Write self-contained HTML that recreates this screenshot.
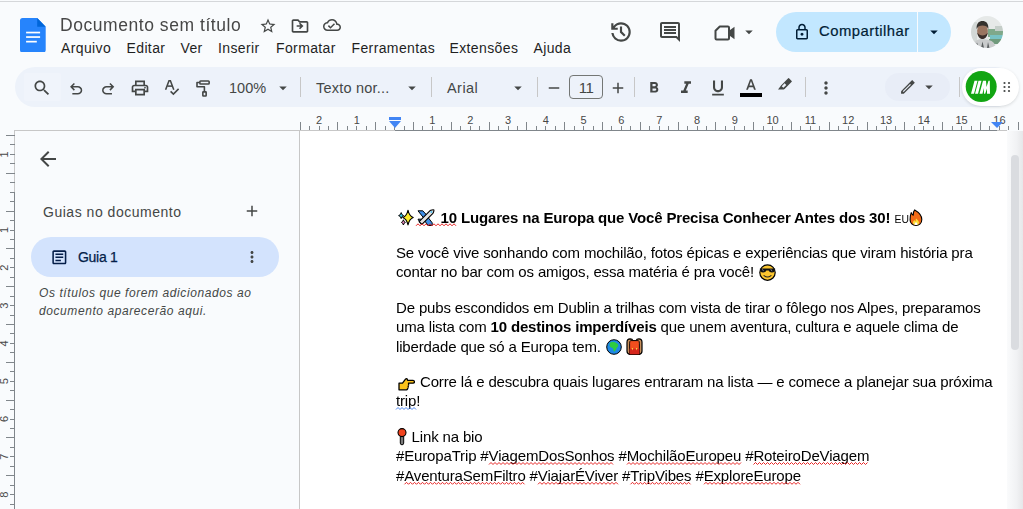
<!DOCTYPE html>
<html><head><meta charset="utf-8">
<style>
*{margin:0;padding:0;box-sizing:border-box}
html,body{width:1023px;height:509px;overflow:hidden;background:#f9fbfd;font-family:"Liberation Sans",sans-serif;color:#1f1f1f;position:relative}
.a{position:absolute}
.topline{left:0;top:1px;width:1023px;height:1px;background:#d5d7da}
.title{left:60px;top:15px;font-size:17.5px;letter-spacing:0.55px;color:#474747;white-space:nowrap;will-change:transform}
.menu{top:40px;font-size:14px;letter-spacing:0.38px;color:#1f1f1f;white-space:nowrap}
.toolbar{left:15px;top:67px;width:1000px;height:40px;border-radius:20px;background:#edf2fa}
.tb{color:#444746;font-size:14px;white-space:nowrap}
.sep{width:1px;height:20px;background:#c7c7c7;top:77px}
.share{left:776px;top:12px;width:175px;height:40px;border-radius:20px;background:#c2e7ff}
.page{left:300px;top:131px;width:707px;height:378px;background:#fff}
.doc{left:396px;font-size:15px;letter-spacing:-0.15px;color:#000;white-space:nowrap;line-height:19.45px}
.doc b{font-weight:bold}
svg.i{position:absolute}
.gs{position:absolute;left:0;top:0;width:1023px;height:509px;will-change:transform}
.wavy{text-decoration:underline wavy #e23b2e;text-decoration-thickness:1px;text-underline-offset:2px;text-decoration-skip-ink:none}
</style></head><body>
<div class="a topline"></div>
<!-- docs logo -->
<svg class="a" style="left:20px;top:17.7px" width="26" height="34.5" viewBox="0 0 26 34.5">
<path d="M2.6 0H17.2L25.7 8.7V31.9a2.6 2.6 0 0 1-2.6 2.6H2.6A2.6 2.6 0 0 1 0 31.9V2.6A2.6 2.6 0 0 1 2.6 0z" fill="#2684fc"/>
<path d="M17.2 0L25.7 8.7H17.2z" fill="#0066da"/>
<rect x="6.1" y="13.7" width="14" height="1.7" fill="#fff"/>
<rect x="6.1" y="18.2" width="14" height="1.7" fill="#fff"/>
<rect x="6.1" y="22.8" width="10.7" height="1.7" fill="#fff"/>
</svg>
<div class="a title">Documento sem título</div>
<div class="a menu" style="left:61px">Arquivo</div>
<div class="a menu" style="left:126.5px">Editar</div>
<div class="a menu" style="left:180.5px">Ver</div>
<div class="a menu" style="left:218px">Inserir</div>
<div class="a menu" style="left:276px">Formatar</div>
<div class="a menu" style="left:351.5px">Ferramentas</div>
<div class="a menu" style="left:449.5px">Extensões</div>
<div class="a menu" style="left:533.5px">Ajuda</div>
<!-- star -->
<svg class="i" style="left:259px;top:17px" width="18" height="18" viewBox="0 0 24 24"><path fill="#444746" d="M22 9.24l-7.19-.62L12 2 9.19 8.63 2 9.24l5.46 4.73L5.82 21 12 17.27 18.18 21l-1.63-7.03L22 9.24zM12 15.4l-3.76 2.27 1-4.28-3.32-2.88 4.38-.38L12 6.1l1.71 4.04 4.38.38-3.32 2.88 1 4.28L12 15.4z"/></svg>
<!-- move folder -->
<svg class="i" style="left:290px;top:16px" width="20" height="20" viewBox="0 0 24 24"><path fill="#444746" d="M4 20q-.825 0-1.412-.587Q2 18.825 2 18V6q0-.825.588-1.412Q3.175 4 4 4h6l2 2h8q.825 0 1.413.588Q22 7.175 22 8v10q0 .825-.587 1.413Q20.825 20 20 20Zm0-2h16V8h-8.825l-2-2H4v12Zm0 0V6v12Zm8.15-2 4-4-4-4-1.4 1.4 1.6 1.6H8v2h4.35l-1.6 1.6Z"/></svg>
<!-- cloud done -->
<svg class="i" style="left:323px;top:16px" width="18" height="18" viewBox="0 0 24 24"><path fill="#444746" d="M19.35 10.04C18.67 6.59 15.64 4 12 4 9.11 4 6.6 5.64 5.35 8.04 2.34 8.36 0 10.91 0 14c0 3.310 2.69 6 6 6h13c2.76 0 5-2.24 5-5 0-2.64-2.05-4.78-4.65-4.96zM19 18H6c-2.21 0-4-1.790-4-4 0-2.05 1.53-3.76 3.56-3.97l1.07-.11.5-.95C8.08 7.14 9.94 6 12 6c2.62 0 4.88 1.86 5.39 4.43l.3 1.5 1.53.11c1.56.1 2.78 1.41 2.78 2.96 0 1.65-1.35 3-3 3zm-9-3.82l-2.09-2.09L6.5 13.5 10 17l6.01-6.01-1.41-1.41z"/></svg>

<!-- history -->
<svg class="i" style="left:607.6px;top:19.3px" width="26" height="26" viewBox="0 0 24 24"><path fill="#444746" d="M12 21q-3.45 0-6.012-2.288Q3.425 16.425 3.05 13H5.1q.35 2.6 2.313 4.3Q9.375 19 12 19q2.925 0 4.962-2.038Q19 14.925 19 12t-2.038-4.963Q14.925 5 12 5q-1.725 0-3.225.8T6.250 8H9v2H3V4h2v2.350q1.275-1.6 3.113-2.475Q9.950 3 12 3q1.875 0 3.513.712 1.637.713 2.85 1.926 1.212 1.212 1.925 2.85Q21 10.125 21 12t-.712 3.512q-.713 1.638-1.925 2.85-1.213 1.213-2.850 1.926Q13.875 21 12 21Zm2.8-4.8L11 12.4V7h2v4.6l3.2 3.2Z"/></svg>
<!-- comment -->
<svg class="i" style="left:658px;top:20px" width="24" height="24" viewBox="0 0 24 24"><path fill="#444746" d="M21.99 4c0-1.1-.89-2-1.99-2H4c-1.1 0-2 .9-2 2v12c0 1.1.9 2 2 2h14l4 4-.01-18zM20 4v13.17L18.83 16H4V4h16zM6 12h12v2H6zm0-3h12v2H6zm0-3h12v2H6z"/></svg>
<!-- meet -->
<svg class="i" style="left:713px;top:21px" width="24" height="24" viewBox="0 0 24 24"><path d="M6.8 5.5H14.9Q16 5.5 16 6.6V17.4Q16 18.5 14.9 18.5H3.6Q2.5 18.5 2.5 17.4V9.8Z" fill="none" stroke="#444746" stroke-width="2" stroke-linejoin="round"/><path d="M16 9.8L21.5 5.8V18.2L16 14.2Z" fill="#444746"/></svg>
<svg class="i" style="left:740px;top:23px" width="18" height="18" viewBox="0 0 24 24"><path fill="#444746" d="M7 10l5 5 5-5z"/></svg>

<div class="a share"></div>
<div class="a" style="left:917px;top:12px;width:1px;height:40px;background:#f9fbfd"></div>
<svg class="i" style="left:793px;top:23px" width="18" height="18" viewBox="0 0 24 24"><path fill="#001d35" d="M6 22q-.825 0-1.412-.587Q4 20.825 4 20V10q0-.825.588-1.413Q5.175 8 6 8h1V6q0-2.075 1.463-3.538Q9.925 1 12 1t3.538 1.462Q17 3.925 17 6v2h1q.825 0 1.413.587Q20 9.175 20 10v10q0 .825-.587 1.413Q18.825 22 18 22Zm0-2h12V10H6v10Zm6-3q.825 0 1.413-.587Q14 15.825 14 15q0-.825-.587-1.413Q12.825 13 12 13q-.825 0-1.412.587Q10 14.175 10 15q0 .825.588 1.413Q11.175 17 12 17ZM9 8h6V6q0-1.25-.875-2.125T12 3q-1.25 0-2.125.875T9 6ZM6 20V10v10Z"/></svg>
<div class="a" style="left:819px;top:23px;font-size:14.8px;letter-spacing:0.5px;-webkit-text-stroke:0.2px #001d35;color:#001d35;white-space:nowrap">Compartilhar</div>
<svg class="i" style="left:925px;top:23px" width="18" height="18" viewBox="0 0 24 24"><path fill="#001d35" d="M7 10l5 5 5-5z"/></svg>
<!-- avatar -->
<svg class="i" style="left:971px;top:16px" width="32" height="32" viewBox="0 0 32 32">
<defs><clipPath id="av"><circle cx="16" cy="16" r="16"/></clipPath><filter id="bl" x="-10%" y="-10%" width="120%" height="120%"><feGaussianBlur stdDeviation="0.45"/></filter></defs>
<g clip-path="url(#av)"><g filter="url(#bl)">
<rect width="32" height="32" fill="#e6e9e8"/>
<rect x="0" y="6" width="6" height="20" fill="#d3d8d6"/>
<rect x="17" y="13" width="15" height="8" fill="#7fa88a"/>
<rect x="24" y="10" width="8" height="5" fill="#c5cec9"/>
<rect x="19" y="19" width="13" height="5" fill="#79c2c4"/>
<rect x="18" y="23" width="14" height="5" fill="#6f9a7c"/>
<path d="M1 32C2 26 5 23.5 10.5 23C16 23 20 24 23 27L25 32Z" fill="#c9cbcc"/>
<path d="M4 32L6 26.5L8 32ZM10 32L11.5 25.5L13 32ZM16 32L17 26L18.5 32Z" fill="#5a5e61"/>
<ellipse cx="11.5" cy="15" rx="5.4" ry="7" fill="#9a7560"/>
<path d="M5.6 13C5.3 7.3 8 5 11.5 5C15 5 17.7 7.3 17.4 13C16.3 10.3 14.2 9.4 11.5 9.4C8.8 9.4 6.7 10.3 5.6 13Z" fill="#35302d"/>
<path d="M6.2 16.5C7 21.5 9.5 23 11.5 23C13.5 23 16 21.5 16.8 16.5C15.4 18.6 13.6 19.4 11.5 19.4C9.4 19.4 7.6 18.6 6.2 16.5Z" fill="#3a2f2a"/>
</g></g></svg>

<!-- toolbar -->
<div class="a toolbar"></div>
<div class="a" style="left:24px;top:73px;width:37px;height:28px;background:#f0f4fb;border-radius:2px"></div>
<svg class="i" style="left:32px;top:78px" width="20" height="20" viewBox="0 0 24 24"><path fill="#444746" d="M15.5 14h-.79l-.28-.27C15.41 12.59 16 11.11 16 9.5 16 5.91 13.09 3 9.5 3S3 5.91 3 9.5 5.91 16 9.5 16c1.61 0 3.09-.59 4.23-1.57l.27.28v.79l5 4.99L20.49 19l-4.99-5zm-6 0C7.010 14 5 11.99 5 9.5S7.01 5 9.5 5 14 7.01 14 9.5 11.99 14 9.5 14z"/></svg>
<svg class="i" style="left:66.6px;top:80.2px" width="18.3" height="18.3" viewBox="0 0 24 24"><path fill="#444746" d="M7 19v-2h7.1q1.575 0 2.738-1T18 13.5q0-1.5-1.162-2.5T14.1 10H7.8l2.6 2.6L9 14 4 9l5-5 1.4 1.4L7.8 8h6.3q2.425 0 4.163 1.575T20 13.5q0 2.35-1.737 3.925T14.1 19Z"/></svg>
<svg class="i" style="left:99px;top:80.2px" width="18.3" height="18.3" viewBox="0 0 24 24"><path fill="#444746" transform="translate(24 0) scale(-1 1)" d="M7 19v-2h7.1q1.575 0 2.738-1T18 13.5q0-1.5-1.162-2.5T14.1 10H7.8l2.6 2.6L9 14 4 9l5-5 1.4 1.4L7.8 8h6.3q2.425 0 4.163 1.575T20 13.5q0 2.35-1.737 3.925T14.1 19Z"/></svg>
<svg class="i" style="left:130px;top:78px" width="20" height="20" viewBox="0 0 24 24"><path fill="#444746" d="M16 8V5H8v3H6V3h12v5ZM18 12.5q.425 0 .713-.288Q19 11.925 19 11.5t-.287-.713Q18.425 10.5 18 10.5t-.712.287Q17 11.075 17 11.5t.288.712q.287.288.712.288ZM16 19v-4H8v4Zm2 2H6v-4H2v-6q0-1.275.875-2.138Q3.75 8 5 8h14q1.275 0 2.138.862Q22 9.725 22 11v6h-4Zm2-6v-4q0-.425-.288-.713Q19.425 10 19 10H5q-.425 0-.713.287Q4 10.575 4 11v4h2v-2h12v2Z"/></svg>
<svg class="i" style="left:160px;top:76px" width="24" height="24" viewBox="0 0 24 24"><g fill="none" stroke="#444746" stroke-width="1.55"><path d="M5.6 13.8L9 4.8H10.4L13.8 13.8" stroke-linejoin="miter"/><path d="M7.3 10.1H12.1"/><path d="M10.6 15.4L13.4 18.1L18.6 12.9"/></g></svg>
<svg class="i" style="left:192px;top:76px" width="22" height="24" viewBox="0 0 22 24"><g fill="none" stroke="#444746" stroke-width="1.6" stroke-linejoin="round"><rect x="7.85" y="4.95" width="9.3" height="3" rx="0.8"/><path d="M7.1 6.45H5.0V10.8H12.4V15.1"/><rect x="10.85" y="15.85" width="3.3" height="4.2" rx="0.5"/></g></svg>
<div class="a tb" style="left:229px;top:80px;font-size:14.5px;letter-spacing:0px">100%</div>
<svg class="i" style="left:274px;top:79px" width="18" height="18" viewBox="0 0 24 24"><path fill="#444746" d="M7 10l5 5 5-5z"/></svg>
<div class="a sep" style="left:300px"></div>
<div class="a tb" style="left:316px;top:80px;font-size:14.5px;letter-spacing:0.22px">Texto nor...</div>
<svg class="i" style="left:403px;top:79px" width="18" height="18" viewBox="0 0 24 24"><path fill="#444746" d="M7 10l5 5 5-5z"/></svg>
<div class="a sep" style="left:431px"></div>
<div class="a tb" style="left:447px;top:80px;font-size:14.5px;letter-spacing:0.45px">Arial</div>
<svg class="i" style="left:508.5px;top:79px" width="18" height="18" viewBox="0 0 24 24"><path fill="#444746" d="M7 10l5 5 5-5z"/></svg>
<div class="a sep" style="left:537px"></div>
<svg class="i" style="left:545px;top:79px" width="18" height="18" viewBox="0 0 24 24"><path fill="#444746" d="M19 13H5v-2h14v2z"/></svg>
<div class="a" style="left:569px;top:75px;width:34px;height:24px;border:1px solid #747775;border-radius:4px"></div>
<div class="a tb" style="left:569px;top:79px;width:34px;text-align:center;font-size:15px;letter-spacing:-0.5px">11</div>
<svg class="i" style="left:609px;top:78.5px" width="18" height="18" viewBox="0 0 24 24"><path fill="#444746" d="M19 13h-6v6h-2v-6H5v-2h6V5h2v6h6v2z"/></svg>
<div class="a sep" style="left:634px"></div>
<svg class="i" style="left:645px;top:79px" width="18" height="18" viewBox="0 0 24 24"><path fill="#444746" d="M15.6 10.79c.97-.67 1.65-1.77 1.65-2.79 0-2.26-1.75-4-4-4H7v14h7.04c2.09 0 3.71-1.7 3.71-3.79 0-1.52-.86-2.82-2.15-3.42zM10 6.5h3c.83 0 1.5.67 1.5 1.5s-.67 1.5-1.5 1.5h-3v-3zm3.5 9H10v-3h3.5c.83 0 1.5.67 1.5 1.5s-.67 1.5-1.5 1.5z"/></svg>
<svg class="i" style="left:676px;top:78px" width="20" height="20" viewBox="0 0 24 24"><path fill="#444746" d="M10 4v3h2.21l-3.42 8H6v3h8v-3h-2.21l3.42-8H18V4z"/></svg>
<svg class="i" style="left:708px;top:78px" width="20" height="20" viewBox="0 0 24 24"><path fill="#444746" d="M12 17c3.31 0 6-2.69 6-6V3h-2.5v8c0 1.93-1.57 3.5-3.5 3.5S8.5 12.930 8.5 11V3H6v8c0 3.31 2.69 6 6 6zm-7 2v2h14v-2H5z"/></svg>
<svg class="i" style="left:742px;top:77px" width="18" height="14.25" viewBox="0 0 24 19"><path fill="#444746" d="M5.49 17h2.42l1.27-3.5h5.65L16.09 17h2.42L13.25 3h-2.5L5.490 17zm4.42-5.61l2.03-5.79h.12l2.03 5.79H9.91z"/></svg>
<div class="a" style="left:740px;top:93px;width:22px;height:4px;background:#000"></div>
<svg class="i" style="left:775px;top:75px" width="20" height="20" viewBox="0 0 20 20"><path fill="#444746" d="M13.2 3.3Q13.6 2.9 14 3.3L16.7 6Q17.1 6.4 16.7 6.8L9.6 13.9L8.6 14.6H3L5.3 11.6L6 10.5Z"/><path fill="#edf2fa" d="M8.44 12.86L6.74 11.16L9.56 8.34L11.26 10.04Z"/></svg>
<div class="a sep" style="left:805px"></div>
<svg class="i" style="left:816px;top:78px" width="20" height="20" viewBox="0 0 24 24"><path fill="#444746" d="M12 8c1.1 0 2-.9 2-2s-.9-2-2-2-2 .9-2 2 .9 2 2 2zm0 2c-1.1 0-2 .9-2 2s.9 2 2 2 2-.9 2-2-.9-2-2-2zm0 6c-1.1 0-2 .9-2 2s.9 2 2 2 2-.9 2-2-.9-2-2-2z"/></svg>
<div class="a" style="left:885px;top:72.5px;width:64.5px;height:28.5px;border-radius:14px;background:#e8edf7"></div>
<svg class="i" style="left:897px;top:77px" width="20" height="20" viewBox="0 0 20 20"><path fill="#444746" d="M4.06 14.16L15.16 3.06L17.84 5.74L6.74 16.84L4.06 16.84Z"/><path fill="#e8edf7" d="M5.78 14.28L13.08 6.98L13.92 7.82L6.62 15.12Z"/></svg>
<svg class="i" style="left:920px;top:78px" width="18" height="18" viewBox="0 0 24 24"><path fill="#444746" d="M7 10l5 5 5-5z"/></svg>
<div class="a sep" style="left:959px"></div>
<div class="a" style="left:962px;top:68px;width:57px;height:38px;border-radius:19px;background:#fff;box-shadow:0 1px 3px rgba(60,64,67,.18)"></div>
<svg class="i" style="left:964px;top:70px" width="34" height="34" viewBox="0 0 34 34"><circle cx="17.2" cy="16.6" r="15.5" fill="#12a512"/>
<path fill="#fff" d="M7 23.8L10 23.8L13.5 10.7L10.5 10.7ZM11 23.8L14 23.8L17.5 10.7L14.5 10.7ZM15.5 23.8L19 10.7L22 10.7L22.5 17L24.5 10.7L25.8 10.7L26 23.8L23 23.8L23 18.5L21.2 23.8L20 23.8L19.8 18L18.5 23.8Z"/></svg>
<svg class="i" style="left:1001px;top:81px" width="12" height="12" viewBox="0 0 12 12"><g fill="#444746"><circle cx="3.5" cy="2" r="1.1"/><circle cx="8" cy="2" r="1.1"/><circle cx="3.5" cy="6" r="1.1"/><circle cx="8" cy="6" r="1.1"/><circle cx="3.5" cy="10" r="1.1"/><circle cx="8" cy="10" r="1.1"/></g></svg>

<!-- page -->
<div class="a page"></div>
<div class="a" style="left:299px;top:131px;width:1px;height:378px;background:#c7c7c7"></div>
<div class="a" style="left:15px;top:130px;width:285px;height:1px;background:#c7c7c7"></div>
<div class="a" style="left:298px;top:130px;width:97px;height:1px;background:#c7c7c7"></div>
<div class="a" style="left:395px;top:130px;width:602px;height:1px;background:#80868b"></div>
<div class="a" style="left:997px;top:130px;width:10px;height:1px;background:#c7c7c7"></div>
<div class="a" style="left:14px;top:130px;width:1px;height:62px;background:#c7c7c7"></div>
<div class="a" style="left:14px;top:192px;width:1px;height:317px;background:#80868b"></div>
<!-- scrollbar -->
<div class="a" style="left:1007px;top:131px;width:16px;height:378px;background:linear-gradient(90deg,#fafbfc 0%,#f1f2f4 60%,#e6e7e9 100%)"></div>
<div class="a" style="left:1011px;top:155px;width:8px;height:195px;border-radius:4px;background:#dadce0"></div>

<svg class="a" style="left:290px;top:108px" width="733" height="24" viewBox="0 0 733 24">
<g stroke="#80868b" stroke-width="1" shape-rendering="crispEdges"><line x1="10.10" y1="14" x2="10.10" y2="22"/><line x1="19.55" y1="18" x2="19.55" y2="22"/><line x1="29.00" y1="18" x2="29.00" y2="22"/><line x1="38.45" y1="18" x2="38.45" y2="22"/><line x1="47.90" y1="14" x2="47.90" y2="22"/><line x1="57.35" y1="18" x2="57.35" y2="22"/><line x1="66.80" y1="18" x2="66.80" y2="22"/><line x1="76.25" y1="18" x2="76.25" y2="22"/><line x1="85.70" y1="14" x2="85.70" y2="22"/><line x1="95.15" y1="18" x2="95.15" y2="22"/><line x1="104.60" y1="18" x2="104.60" y2="22"/><line x1="114.05" y1="18" x2="114.05" y2="22"/><line x1="123.50" y1="14" x2="123.50" y2="22"/><line x1="132.95" y1="18" x2="132.95" y2="22"/><line x1="142.40" y1="18" x2="142.40" y2="22"/><line x1="151.85" y1="18" x2="151.85" y2="22"/><line x1="161.30" y1="14" x2="161.30" y2="22"/><line x1="170.75" y1="18" x2="170.75" y2="22"/><line x1="180.20" y1="18" x2="180.20" y2="22"/><line x1="189.65" y1="18" x2="189.65" y2="22"/><line x1="199.10" y1="14" x2="199.10" y2="22"/><line x1="208.55" y1="18" x2="208.55" y2="22"/><line x1="218.00" y1="18" x2="218.00" y2="22"/><line x1="227.45" y1="18" x2="227.45" y2="22"/><line x1="236.90" y1="14" x2="236.90" y2="22"/><line x1="246.35" y1="18" x2="246.35" y2="22"/><line x1="255.80" y1="18" x2="255.80" y2="22"/><line x1="265.25" y1="18" x2="265.25" y2="22"/><line x1="274.70" y1="14" x2="274.70" y2="22"/><line x1="284.15" y1="18" x2="284.15" y2="22"/><line x1="293.60" y1="18" x2="293.60" y2="22"/><line x1="303.05" y1="18" x2="303.05" y2="22"/><line x1="312.50" y1="14" x2="312.50" y2="22"/><line x1="321.95" y1="18" x2="321.95" y2="22"/><line x1="331.40" y1="18" x2="331.40" y2="22"/><line x1="340.85" y1="18" x2="340.85" y2="22"/><line x1="350.30" y1="14" x2="350.30" y2="22"/><line x1="359.75" y1="18" x2="359.75" y2="22"/><line x1="369.20" y1="18" x2="369.20" y2="22"/><line x1="378.65" y1="18" x2="378.65" y2="22"/><line x1="388.10" y1="14" x2="388.10" y2="22"/><line x1="397.55" y1="18" x2="397.55" y2="22"/><line x1="407.00" y1="18" x2="407.00" y2="22"/><line x1="416.45" y1="18" x2="416.45" y2="22"/><line x1="425.90" y1="14" x2="425.90" y2="22"/><line x1="435.35" y1="18" x2="435.35" y2="22"/><line x1="444.80" y1="18" x2="444.80" y2="22"/><line x1="454.25" y1="18" x2="454.25" y2="22"/><line x1="463.70" y1="14" x2="463.70" y2="22"/><line x1="473.15" y1="18" x2="473.15" y2="22"/><line x1="482.60" y1="18" x2="482.60" y2="22"/><line x1="492.05" y1="18" x2="492.05" y2="22"/><line x1="501.50" y1="14" x2="501.50" y2="22"/><line x1="510.95" y1="18" x2="510.95" y2="22"/><line x1="520.40" y1="18" x2="520.40" y2="22"/><line x1="529.85" y1="18" x2="529.85" y2="22"/><line x1="539.30" y1="14" x2="539.30" y2="22"/><line x1="548.75" y1="18" x2="548.75" y2="22"/><line x1="558.20" y1="18" x2="558.20" y2="22"/><line x1="567.65" y1="18" x2="567.65" y2="22"/><line x1="577.10" y1="14" x2="577.10" y2="22"/><line x1="586.55" y1="18" x2="586.55" y2="22"/><line x1="596.00" y1="18" x2="596.00" y2="22"/><line x1="605.45" y1="18" x2="605.45" y2="22"/><line x1="614.90" y1="14" x2="614.90" y2="22"/><line x1="624.35" y1="18" x2="624.35" y2="22"/><line x1="633.80" y1="18" x2="633.80" y2="22"/><line x1="643.25" y1="18" x2="643.25" y2="22"/><line x1="652.70" y1="14" x2="652.70" y2="22"/><line x1="662.15" y1="18" x2="662.15" y2="22"/><line x1="671.60" y1="18" x2="671.60" y2="22"/><line x1="681.05" y1="18" x2="681.05" y2="22"/><line x1="690.50" y1="14" x2="690.50" y2="22"/><line x1="699.95" y1="18" x2="699.95" y2="22"/><line x1="709.40" y1="18" x2="709.40" y2="22"/><line x1="718.85" y1="18" x2="718.85" y2="22"/><line x1="728.30" y1="14" x2="728.30" y2="22"/></g>
<g font-family="Liberation Sans" font-size="11" fill="#474747" text-anchor="middle"><text x="29.00" y="16">2</text><text x="66.80" y="16">1</text><text x="142.40" y="16">1</text><text x="180.20" y="16">2</text><text x="218.00" y="16">3</text><text x="255.80" y="16">4</text><text x="293.60" y="16">5</text><text x="331.40" y="16">6</text><text x="369.20" y="16">7</text><text x="407.00" y="16">8</text><text x="444.80" y="16">9</text><text x="482.60" y="16">10</text><text x="520.40" y="16">11</text><text x="558.20" y="16">12</text><text x="596.00" y="16">13</text><text x="633.80" y="16">14</text><text x="671.60" y="16">15</text><text x="709.40" y="16">16</text></g>
</svg>
<svg class="a" style="left:0;top:0" width="16" height="509" viewBox="0 0 16 509">
<g stroke="#80868b" stroke-width="1" shape-rendering="crispEdges"><line x1="6" y1="135.50" x2="15" y2="135.50"/><line x1="10" y1="144.95" x2="15" y2="144.95"/><line x1="10" y1="154.40" x2="15" y2="154.40"/><line x1="10" y1="163.85" x2="15" y2="163.85"/><line x1="6" y1="173.30" x2="15" y2="173.30"/><line x1="10" y1="182.75" x2="15" y2="182.75"/><line x1="10" y1="192.20" x2="15" y2="192.20"/><line x1="10" y1="201.65" x2="15" y2="201.65"/><line x1="6" y1="211.10" x2="15" y2="211.10"/><line x1="10" y1="220.55" x2="15" y2="220.55"/><line x1="10" y1="230.00" x2="15" y2="230.00"/><line x1="10" y1="239.45" x2="15" y2="239.45"/><line x1="6" y1="248.90" x2="15" y2="248.90"/><line x1="10" y1="258.35" x2="15" y2="258.35"/><line x1="10" y1="267.80" x2="15" y2="267.80"/><line x1="10" y1="277.25" x2="15" y2="277.25"/><line x1="6" y1="286.70" x2="15" y2="286.70"/><line x1="10" y1="296.15" x2="15" y2="296.15"/><line x1="10" y1="305.60" x2="15" y2="305.60"/><line x1="10" y1="315.05" x2="15" y2="315.05"/><line x1="6" y1="324.50" x2="15" y2="324.50"/><line x1="10" y1="333.95" x2="15" y2="333.95"/><line x1="10" y1="343.40" x2="15" y2="343.40"/><line x1="10" y1="352.85" x2="15" y2="352.85"/><line x1="6" y1="362.30" x2="15" y2="362.30"/><line x1="10" y1="371.75" x2="15" y2="371.75"/><line x1="10" y1="381.20" x2="15" y2="381.20"/><line x1="10" y1="390.65" x2="15" y2="390.65"/><line x1="6" y1="400.10" x2="15" y2="400.10"/><line x1="10" y1="409.55" x2="15" y2="409.55"/><line x1="10" y1="419.00" x2="15" y2="419.00"/><line x1="10" y1="428.45" x2="15" y2="428.45"/><line x1="6" y1="437.90" x2="15" y2="437.90"/><line x1="10" y1="447.35" x2="15" y2="447.35"/><line x1="10" y1="456.80" x2="15" y2="456.80"/><line x1="10" y1="466.25" x2="15" y2="466.25"/><line x1="6" y1="475.70" x2="15" y2="475.70"/><line x1="10" y1="485.15" x2="15" y2="485.15"/><line x1="10" y1="494.60" x2="15" y2="494.60"/><line x1="10" y1="504.05" x2="15" y2="504.05"/></g>
<g font-family="Liberation Sans" font-size="11" fill="#474747" text-anchor="middle"><text transform="translate(8 154.40) rotate(-90)" y="0">1</text><text transform="translate(8 230.00) rotate(-90)" y="0">1</text><text transform="translate(8 267.80) rotate(-90)" y="0">2</text><text transform="translate(8 305.60) rotate(-90)" y="0">3</text><text transform="translate(8 343.40) rotate(-90)" y="0">4</text><text transform="translate(8 381.20) rotate(-90)" y="0">5</text><text transform="translate(8 419.00) rotate(-90)" y="0">6</text><text transform="translate(8 456.80) rotate(-90)" y="0">7</text><text transform="translate(8 494.60) rotate(-90)" y="0">8</text></g>
</svg>
<!-- margin markers -->
<svg class="i" style="left:388px;top:116px" width="14" height="14" viewBox="0 0 14 14"><rect x="1" y="1" width="12" height="3" fill="#4285f4"/><path d="M1 5h12l-6 7z" fill="#4285f4"/></svg>
<svg class="i" style="left:990px;top:120px" width="14" height="10" viewBox="0 0 14 10"><path d="M1 2h12l-6 6z" fill="#4285f4"/></svg>

<!-- sidebar -->
<svg class="i" style="left:36px;top:147px" width="24" height="24" viewBox="0 0 24 24"><path fill="#444746" d="M20 11H7.83l5.59-5.59L12 4l-8 8 8 8 1.41-1.41L7.83 13H20v-2z"/></svg>
<div class="a" style="left:43px;top:203.5px;font-size:14px;letter-spacing:0.52px;color:#444746;white-space:nowrap">Guias no documento</div>
<svg class="i" style="left:243px;top:202px" width="18" height="18" viewBox="0 0 24 24"><path fill="#444746" d="M19 13h-6v6h-2v-6H5v-2h6V5h2v6h6v2z"/></svg>
<div class="a" style="left:31px;top:237px;width:248px;height:40px;border-radius:20px;background:#d3e3fd"></div>
<svg class="i" style="left:49.7px;top:247.5px" width="18.7" height="18.7" viewBox="0 0 24 24"><path fill="#041e49" d="M7 17h7v-2H7Zm0-4h10v-2H7Zm0-4h10V7H7ZM5 21q-.825 0-1.413-.587Q3 19.825 3 19V5q0-.825.587-1.413Q4.175 3 5 3h14q.825 0 1.413.587Q21 4.175 21 5v14q0 .825-.587 1.413Q19.825 21 19 21Zm0-2h14V5H5v14ZM5 5v14V5Z"/></svg>
<div class="a" style="left:78px;top:249px;font-size:14px;letter-spacing:-0.3px;-webkit-text-stroke:0.25px #041e49;color:#041e49;white-space:nowrap">Guia 1</div>
<svg class="i" style="left:243px;top:248px" width="18" height="18" viewBox="0 0 24 24"><path fill="#444746" d="M12 8c1.1 0 2-.9 2-2s-.9-2-2-2-2 .9-2 2 .9 2 2 2zm0 2c-1.1 0-2 .9-2 2s.9 2 2 2 2-.9 2-2-.9-2-2-2zm0 6c-1.1 0-2 .9-2 2s.9 2 2 2 2-.9 2-2-.9-2-2-2z"/></svg>
<div class="a" style="left:39px;top:285.3px;font-size:12px;letter-spacing:0.58px;line-height:17.4px;color:#444746;font-style:italic;white-space:nowrap">Os títulos que forem adicionados ao<br>documento aparecerão aqui.</div>

<!-- document -->
<div class="gs"><!-- heading -->
<svg class="i" style="left:397px;top:209px" width="17" height="17" viewBox="0 0 17 17">
<path d="M11 1.2Q12.2 7 16.2 8.6Q12.2 10.2 11 16Q9.8 10.2 5.8 8.6Q9.8 7 11 1.2Z" fill="#fcea2b" stroke="#000" stroke-width="1.1" stroke-linejoin="round"/>
<path d="M4.2 3.6Q4.6 6.1 6.6 6.6Q4.6 7.1 4.2 9.6Q3.8 7.1 1.6 6.6Q3.8 6.1 4.2 3.6Z" fill="#2ec6e8" stroke="#000" stroke-width="1" stroke-linejoin="round"/>
<path d="M6.4 10.8Q6.8 12.9 8.4 13.4Q6.8 13.9 6.4 16Q6 13.9 4.4 13.4Q6 12.9 6.4 10.8Z" fill="#f28dc0" stroke="#000" stroke-width="1" stroke-linejoin="round"/>
</svg>
<svg class="i" style="left:417px;top:209px" width="18" height="17" viewBox="0 0 18 17">
<g stroke="#000" stroke-width="1" stroke-linejoin="round" fill="#3d8ee8">
<path d="M1 1.8H5.8L11.6 8.2L8.4 11.2Z"/>
<path d="M6.2 9.8L9.8 6.8L15.2 13.8V16.4H11Z"/>
<path d="M1 10.2H3.6L6.4 12.6L4.4 15.6Z"/>
</g>
<path d="M2.1 12.6L13.1 1.6Q16.2 0.2 16.8 0.9Q17.3 1.6 15.9 4.4L4.9 15.4Z" fill="#e3e3e3" stroke="#000" stroke-width="1.1" stroke-linejoin="round"/>
<circle cx="14.4" cy="2.9" r="1" fill="#4fc3f7"/>
</svg>
<div class="a doc" style="left:440.6px;top:208.2px;font-weight:bold;letter-spacing:-0.16px">10 Lugares na Europa que Você Precisa Conhecer Antes dos 30!</div>
<div class="a doc" style="left:894.5px;top:211px;font-size:10.4px;letter-spacing:0.1px;color:#000;margin-top:-0.6px">EU</div>
<svg class="i" style="left:909px;top:209px" width="14" height="17" viewBox="0 0 14 17">
<path d="M5.7 0.9C8.5 2.5 12.8 5.5 12.8 10.5C12.8 14.3 10.2 16.4 7 16.4C3.6 16.4 1.1 14.2 1.1 11C1.1 8 1.6 5.2 2.2 3.6C2.8 5 3.5 5.8 4.2 6.2C4.1 4 4.6 2.2 5.7 0.9Z" fill="#f26b17" stroke="#000" stroke-width="1.1" stroke-linejoin="round"/>
<path d="M7 9.5C8.5 11 10 12.2 10 13.8C10 15.2 8.7 16 7 16C5.3 16 4 15.2 4 13.8C4 12.4 5 11.5 5.5 11C5.8 12 6.4 12.3 6.8 12.4C6.5 11.5 6.6 10.5 7 9.5Z" fill="#fbe03c"/>
<path d="M7 13C8 14 8.4 14.6 8.4 15.2C8.4 15.8 7.8 16 7 16C6.2 16 5.6 15.8 5.6 15.2C5.6 14.6 6 14 7 13Z" fill="#fff"/>
</svg>

<!-- p1 -->
<div class="a doc" style="left:396px;top:243px">Se você vive sonhando com mochilão, fotos épicas e experiências que viram história pra<br>contar no bar com os amigos, essa matéria é pra você!</div>
<svg class="i" style="left:759px;top:264px" width="17" height="17" viewBox="0 0 17 17">
<circle cx="8.5" cy="8.6" r="7.7" fill="#fcc62f" stroke="#000" stroke-width="1.2"/>
<path d="M0.9 4.4H16.1V6.2Q15.6 8.8 12.8 8.6Q10.4 8.4 9.6 6.5H7.4Q6.6 8.4 4.2 8.6Q1.4 8.8 0.9 6.2Z" fill="#111"/>
<path d="M3.4 5.2L4.6 7.2M11.8 5.2L13 7.2" stroke="#888" stroke-width="0.9"/>
<path d="M5 11.6Q8.5 14.4 12 11.6" fill="none" stroke="#222" stroke-width="1.1" stroke-linecap="round"/>
</svg>

<!-- p2 -->
<div class="a doc" style="left:396px;top:297.7px">De pubs escondidos em Dublin a trilhas com vista de tirar o fôlego nos Alpes, preparamos<br>uma lista com <b style="letter-spacing:-0.18px">10 destinos imperdíveis</b> que unem aventura, cultura e aquele clima de<br>liberdade que só a Europa tem.</div>
<svg class="i" style="left:606px;top:339px" width="16" height="16" viewBox="0 0 16 16">
<circle cx="8" cy="8" r="7.3" fill="#1e88e5" stroke="#000" stroke-width="1"/>
<path d="M4.2 3.5Q6.5 2.4 9 3.2Q10.8 3.9 12.2 5.6Q12.6 7.2 11.6 8Q10.6 8.6 10 10.4Q9.2 12.4 8 12.8Q7.3 11.2 7.2 9.8Q6.9 8.8 5.2 8.5Q3.8 8.2 3.6 6.6Q3.6 5 4.2 3.5Z" fill="#2ecc40"/>
</svg>
<svg class="i" style="left:625.5px;top:338px" width="17" height="17" viewBox="0 0 17 17">
<path d="M1 4.2Q1 0.9 4.1 0.8Q6.4 0.8 6.9 2.6H10.1Q10.6 0.8 12.9 0.8Q16 0.9 16 4.2V13Q16 15.6 13.6 16.4H3.4Q1 15.6 1 13Z" fill="#c8905c" stroke="#000" stroke-width="1.2" stroke-linejoin="round"/>
<path d="M3.6 5.2Q3.6 3.2 4.6 2.6H12.4Q13.4 3.2 13.4 5.2V16.3H3.6Z" fill="#f24e1e" stroke="#000" stroke-width="0.9"/>
<path d="M3.6 10.6H13.4V16.3H3.6Z" fill="#d7261c"/>
<path d="M5.6 10L6.4 12.4L7.2 10Z M9.8 10L10.6 12.4L11.4 10Z" fill="#fbd13c"/>
</svg>

<!-- p3 -->
<svg class="i" style="left:397.5px;top:377px" width="17" height="14" viewBox="0 0 17 14">
<path d="M1 6.2H4.5L7.5 2.2Q8.4 1.2 9.2 2L9.6 3.4H15Q16.5 3.6 16.5 4.8Q16.5 6 15 6.2H10.5Q10.8 8.2 10.2 9.6Q9.8 12.6 8.4 12.8H1Z" fill="#fcc21b" stroke="#000" stroke-width="1.3" stroke-linejoin="round"/>
<path d="M9 8.4H10.6M8.8 10.4H10.2" stroke="#d99a0a" stroke-width="0.7"/>
</svg>
<div class="a doc" style="left:420px;top:371.9px">Corre lá e descubra quais lugares entraram na lista — e comece a planejar sua próxima</div>
<div class="a doc" style="left:396px;top:391.4px">trip!</div>

<!-- p4 -->
<svg class="i" style="left:397px;top:428px" width="10" height="18" viewBox="0 0 10 18">
<rect x="3.3" y="7" width="3.4" height="9.8" rx="1.7" fill="#7a7a7a" stroke="#000" stroke-width="1"/>
<circle cx="5" cy="4.6" r="4" fill="#f1431d" stroke="#000" stroke-width="1.1"/>
</svg>
<div class="a doc" style="left:411.6px;top:426.8px">Link na bio</div>
<div class="a doc" style="left:396px;top:446.2px">#EuropaTrip #<span class="sp">ViagemDosSonhos</span> #<span class="sp">MochilãoEuropeu</span> #<span class="sp">RoteiroDeViagem</span><br>#<span class="sp">AventuraSemFiltro</span> #<span class="sp">ViajarÉViver</span> #<span class="sp">TripVibes</span> #<span class="sp">ExploreEurope</span></div>

<svg class="i" style="left:0;top:0" width="1023" height="509" viewBox="0 0 1023 509"><g fill="none" stroke="#e62222" stroke-width="1"><path d="M416.0 225.8 L418.0 223.8 L420.0 225.8 L422.0 223.8 L424.0 225.8 L426.0 223.8 L428.0 225.8 L430.0 223.8 L432.0 225.8 L434.0 223.8 L436.0 225.8 L438.0 223.8 L440.0 225.8 L442.0 223.8 L444.0 225.8 L446.0 223.8 L448.0 225.8 L450.0 223.8 L452.0 225.8 L454.0 223.8 L456.0 225.8"/><path d="M489.0 464.5 L491.0 462.5 L493.0 464.5 L495.0 462.5 L497.0 464.5 L499.0 462.5 L501.0 464.5 L503.0 462.5 L505.0 464.5 L507.0 462.5 L509.0 464.5 L511.0 462.5 L513.0 464.5 L515.0 462.5 L517.0 464.5 L519.0 462.5 L521.0 464.5 L523.0 462.5 L525.0 464.5 L527.0 462.5 L529.0 464.5 L531.0 462.5 L533.0 464.5 L535.0 462.5 L537.0 464.5 L539.0 462.5 L541.0 464.5 L543.0 462.5 L545.0 464.5 L547.0 462.5 L549.0 464.5 L551.0 462.5 L553.0 464.5 L555.0 462.5 L557.0 464.5 L559.0 462.5 L561.0 464.5 L563.0 462.5 L565.0 464.5 L567.0 462.5 L569.0 464.5 L571.0 462.5 L573.0 464.5 L575.0 462.5 L577.0 464.5 L579.0 462.5 L581.0 464.5 L583.0 462.5 L585.0 464.5 L587.0 462.5 L589.0 464.5 L591.0 462.5 L593.0 464.5 L595.0 462.5 L597.0 464.5 L599.0 462.5 L601.0 464.5 L603.0 462.5 L605.0 464.5 L607.0 462.5 L609.0 464.5 L611.0 462.5 L613.0 464.5"/><path d="M627.0 464.5 L629.0 462.5 L631.0 464.5 L633.0 462.5 L635.0 464.5 L637.0 462.5 L639.0 464.5 L641.0 462.5 L643.0 464.5 L645.0 462.5 L647.0 464.5 L649.0 462.5 L651.0 464.5 L653.0 462.5 L655.0 464.5 L657.0 462.5 L659.0 464.5 L661.0 462.5 L663.0 464.5 L665.0 462.5 L667.0 464.5 L669.0 462.5 L671.0 464.5 L673.0 462.5 L675.0 464.5 L677.0 462.5 L679.0 464.5 L681.0 462.5 L683.0 464.5 L685.0 462.5 L687.0 464.5 L689.0 462.5 L691.0 464.5 L693.0 462.5 L695.0 464.5 L697.0 462.5 L699.0 464.5 L701.0 462.5 L703.0 464.5 L705.0 462.5 L707.0 464.5 L709.0 462.5 L711.0 464.5 L713.0 462.5 L715.0 464.5 L717.0 462.5 L719.0 464.5 L721.0 462.5 L723.0 464.5 L725.0 462.5 L727.0 464.5 L729.0 462.5 L731.0 464.5 L733.0 462.5 L735.0 464.5 L737.0 462.5 L739.0 464.5 L741.0 462.5"/><path d="M753.5 464.5 L755.5 462.5 L757.5 464.5 L759.5 462.5 L761.5 464.5 L763.5 462.5 L765.5 464.5 L767.5 462.5 L769.5 464.5 L771.5 462.5 L773.5 464.5 L775.5 462.5 L777.5 464.5 L779.5 462.5 L781.5 464.5 L783.5 462.5 L785.5 464.5 L787.5 462.5 L789.5 464.5 L791.5 462.5 L793.5 464.5 L795.5 462.5 L797.5 464.5 L799.5 462.5 L801.5 464.5 L803.5 462.5 L805.5 464.5 L807.5 462.5 L809.5 464.5 L811.5 462.5 L813.5 464.5 L815.5 462.5 L817.5 464.5 L819.5 462.5 L821.5 464.5 L823.5 462.5 L825.5 464.5 L827.5 462.5 L829.5 464.5 L831.5 462.5 L833.5 464.5 L835.5 462.5 L837.5 464.5 L839.5 462.5 L841.5 464.5 L843.5 462.5 L845.5 464.5 L847.5 462.5 L849.5 464.5 L851.5 462.5 L853.5 464.5 L855.5 462.5 L857.5 464.5 L859.5 462.5 L861.5 464.5 L863.5 462.5 L865.5 464.5 L867.5 462.5"/><path d="M404.5 484.3 L406.5 482.3 L408.5 484.3 L410.5 482.3 L412.5 484.3 L414.5 482.3 L416.5 484.3 L418.5 482.3 L420.5 484.3 L422.5 482.3 L424.5 484.3 L426.5 482.3 L428.5 484.3 L430.5 482.3 L432.5 484.3 L434.5 482.3 L436.5 484.3 L438.5 482.3 L440.5 484.3 L442.5 482.3 L444.5 484.3 L446.5 482.3 L448.5 484.3 L450.5 482.3 L452.5 484.3 L454.5 482.3 L456.5 484.3 L458.5 482.3 L460.5 484.3 L462.5 482.3 L464.5 484.3 L466.5 482.3 L468.5 484.3 L470.5 482.3 L472.5 484.3 L474.5 482.3 L476.5 484.3 L478.5 482.3 L480.5 484.3 L482.5 482.3 L484.5 484.3 L486.5 482.3 L488.5 484.3 L490.5 482.3 L492.5 484.3 L494.5 482.3 L496.5 484.3 L498.5 482.3 L500.5 484.3 L502.5 482.3 L504.5 484.3 L506.5 482.3 L508.5 484.3 L510.5 482.3 L512.5 484.3 L514.5 482.3 L516.5 484.3 L518.5 482.3 L520.5 484.3 L522.5 482.3 L524.5 484.3"/><path d="M538.0 484.3 L540.0 482.3 L542.0 484.3 L544.0 482.3 L546.0 484.3 L548.0 482.3 L550.0 484.3 L552.0 482.3 L554.0 484.3 L556.0 482.3 L558.0 484.3 L560.0 482.3 L562.0 484.3 L564.0 482.3 L566.0 484.3 L568.0 482.3 L570.0 484.3 L572.0 482.3 L574.0 484.3 L576.0 482.3 L578.0 484.3 L580.0 482.3 L582.0 484.3 L584.0 482.3 L586.0 484.3 L588.0 482.3 L590.0 484.3 L592.0 482.3 L594.0 484.3 L596.0 482.3 L598.0 484.3 L600.0 482.3 L602.0 484.3 L604.0 482.3 L606.0 484.3 L608.0 482.3 L610.0 484.3 L612.0 482.3 L614.0 484.3 L616.0 482.3 L618.0 484.3"/><path d="M630.5 484.3 L632.5 482.3 L634.5 484.3 L636.5 482.3 L638.5 484.3 L640.5 482.3 L642.5 484.3 L644.5 482.3 L646.5 484.3 L648.5 482.3 L650.5 484.3 L652.5 482.3 L654.5 484.3 L656.5 482.3 L658.5 484.3 L660.5 482.3 L662.5 484.3 L664.5 482.3 L666.5 484.3 L668.5 482.3 L670.5 484.3 L672.5 482.3 L674.5 484.3 L676.5 482.3 L678.5 484.3 L680.5 482.3 L682.5 484.3 L684.5 482.3 L686.5 484.3 L688.5 482.3 L690.5 484.3"/><path d="M704.0 484.3 L706.0 482.3 L708.0 484.3 L710.0 482.3 L712.0 484.3 L714.0 482.3 L716.0 484.3 L718.0 482.3 L720.0 484.3 L722.0 482.3 L724.0 484.3 L726.0 482.3 L728.0 484.3 L730.0 482.3 L732.0 484.3 L734.0 482.3 L736.0 484.3 L738.0 482.3 L740.0 484.3 L742.0 482.3 L744.0 484.3 L746.0 482.3 L748.0 484.3 L750.0 482.3 L752.0 484.3 L754.0 482.3 L756.0 484.3 L758.0 482.3 L760.0 484.3 L762.0 482.3 L764.0 484.3 L766.0 482.3 L768.0 484.3 L770.0 482.3 L772.0 484.3 L774.0 482.3 L776.0 484.3 L778.0 482.3 L780.0 484.3 L782.0 482.3 L784.0 484.3 L786.0 482.3 L788.0 484.3 L790.0 482.3 L792.0 484.3 L794.0 482.3 L796.0 484.3 L798.0 482.3 L800.0 484.3"/></g><g fill="none" stroke="#4a86f0" stroke-width="1"><path d="M396.0 409.5 L398.0 407.5 L400.0 409.5 L402.0 407.5 L404.0 409.5 L406.0 407.5 L408.0 409.5 L410.0 407.5 L412.0 409.5 L414.0 407.5 L416.0 409.5"/></g></svg>
</div>
</body></html>
